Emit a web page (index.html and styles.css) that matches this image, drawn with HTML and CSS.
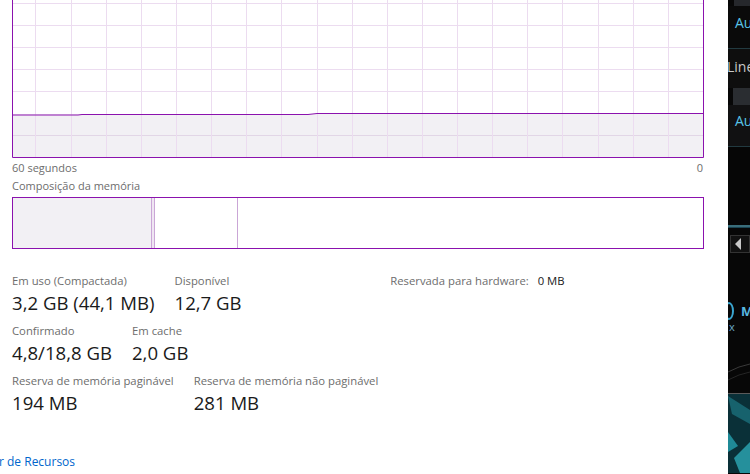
FILE: index.html
```html
<html>
<head>
    <title>Gerenciador de Tarefas - Memória</title>
    <link rel="stylesheet" href="styles.css">
</head>
<body>
<div class="window">
    <div class="main">
        <!-- gráfico de uso de memória -->
        <svg class="graph" width="692" height="159" viewBox="0 0 692 159">
            <rect x="1" y="114" width="690" height="43" fill="#f2f0f4"/>
            <g stroke="#ecdcf0" stroke-width="1">
                <line x1="0" y1="3.5" x2="692" y2="3.5"/>
                <line x1="0" y1="25.5" x2="692" y2="25.5"/>
                <line x1="0" y1="47.5" x2="692" y2="47.5"/>
                <line x1="0" y1="69.5" x2="692" y2="69.5"/>
                <line x1="0" y1="91.5" x2="692" y2="91.5"/>
                <line x1="0" y1="135.5" x2="692" y2="135.5" stroke="#e2d6e6"/>
            </g>
            <g stroke="#ecdcf0" stroke-width="1">
                <line x1="23.5" y1="0" x2="23.5" y2="157"/>
                <line x1="59.5" y1="0" x2="59.5" y2="157"/>
                <line x1="94.5" y1="0" x2="94.5" y2="157"/>
                <line x1="129.5" y1="0" x2="129.5" y2="157"/>
                <line x1="164.5" y1="0" x2="164.5" y2="157"/>
                <line x1="199.5" y1="0" x2="199.5" y2="157"/>
                <line x1="234.5" y1="0" x2="234.5" y2="157"/>
                <line x1="269.5" y1="0" x2="269.5" y2="157"/>
                <line x1="305.5" y1="0" x2="305.5" y2="157"/>
                <line x1="340.5" y1="0" x2="340.5" y2="157"/>
                <line x1="375.5" y1="0" x2="375.5" y2="157"/>
                <line x1="410.5" y1="0" x2="410.5" y2="157"/>
                <line x1="445.5" y1="0" x2="445.5" y2="157"/>
                <line x1="480.5" y1="0" x2="480.5" y2="157"/>
                <line x1="515.5" y1="0" x2="515.5" y2="157"/>
                <line x1="550.5" y1="0" x2="550.5" y2="157"/>
                <line x1="586.5" y1="0" x2="586.5" y2="157"/>
                <line x1="621.5" y1="0" x2="621.5" y2="157"/>
                <line x1="656.5" y1="0" x2="656.5" y2="157"/>
            </g>
            <polyline points="0,115 66,115 70,114.5 296,114.5 305,113.5 692,113.5" fill="none" stroke="#8b12ae" stroke-width="1"/>
            <polyline points="0.5,0 0.5,157.5 691.5,157.5 691.5,0" fill="none" stroke="#8b12ae" stroke-width="1"/>
        </svg>
        <div class="axis">
            <span>60 segundos</span>
            <span>0</span>
        </div>
        <div class="caption">Composição da memória</div>
        <div class="composition">
            <div class="seg inuse"></div>
            <div class="seg modified"></div>
            <div class="seg standby"></div>
            <div class="seg free"></div>
        </div>

        <div class="stats">
            <div class="statsLeft">
                <div class="row">
                    <div class="stat">
                        <div class="label">Em uso (Compactada)</div>
                        <div class="value">3,2 GB (44,1 MB)</div>
                    </div>
                    <div class="stat">
                        <div class="label">Disponível</div>
                        <div class="value">12,7 GB</div>
                    </div>
                </div>
                <div class="row">
                    <div class="stat">
                        <div class="label">Confirmado</div>
                        <div class="value">4,8/18,8 GB</div>
                    </div>
                    <div class="stat">
                        <div class="label">Em cache</div>
                        <div class="value">2,0 GB</div>
                    </div>
                </div>
                <div class="row">
                    <div class="stat">
                        <div class="label">Reserva de memória paginável</div>
                        <div class="value">194 MB</div>
                    </div>
                    <div class="stat">
                        <div class="label">Reserva de memória não paginável</div>
                        <div class="value">281 MB</div>
                    </div>
                </div>
            </div>
            <div class="statsRight">
                <span class="label">Reservada para hardware:</span>
                <span class="small">0 MB</span>
            </div>
        </div>

        <a class="link" href="#">r de Recursos</a>
    </div>

    <!-- janela de outro programa atrás -->
    <div class="side">
        <div class="sideTop"></div>
        <div class="sideItem"><span class="cyan">Au</span></div>
        <div class="sideLine"></div>
        <div class="sideText">Line</div>
        <div class="sideBlock"></div>
        <div class="sideItem second"><span class="cyan">Au</span></div>
        <div class="sideLine"></div>
        <div class="sideGap"></div>
        <div class="tealLine"></div>
        <div class="arrowBox"><span class="arrow"></span></div>
        <div class="sideGap2"></div>
        <div class="logo"><span class="ring"></span><span class="logoM">M</span></div>
        <div class="logoX">x</div>
        <svg class="art" width="22" height="137" viewBox="0 0 22 137">
            <path d="M0 36 Q11 30 22 28" stroke="#3a3a3a" fill="none"/>
            <path d="M0 44 Q11 38 22 36" stroke="#262626" fill="none"/>
            <rect x="0" y="57" width="22" height="1" fill="#5a5a5a"/>
            <rect x="0" y="58" width="22" height="79" fill="#0a3038"/>
            <polygon points="0,60 22,74 22,88 4,78" fill="#17626d"/>
            <polygon points="0,96 10,110 0,116" fill="#1f8a97"/>
            <polygon points="6,122 22,106 22,137 12,137" fill="#25909c"/>
        </svg>
    </div>
</div>
</body>
</html>
```

FILE: styles.css
```css
body{
    margin: 0;
    font-family: "Open Sans", "Noto Sans", sans-serif;
    background-color: #ffffff;
    overflow: hidden;
}

.window{
    display: flex;
    width: 750px;
    height: 474px;
}

/* Painel de memória */
.main{
    flex: none;
    width: 692px;
    padding-left: 12px;
    padding-right: 24px;
    display: flex;
    flex-direction: column;
    background-color: #ffffff;
}

.graph{
    display: block;
}

.axis{
    display: flex;
    justify-content: space-between;
    font-size: 11px;
    line-height: 16px;
    color: #6d6d6d;
    margin-top: 1px;
    padding-right: 1px;
}

.caption{
    font-size: 11px;
    line-height: 16px;
    color: #6d6d6d;
    margin-top: 2px;
}

.composition{
    display: flex;
    height: 50px;
    border: 1px solid #8b12ae;
    margin-top: 3px;
}
.seg{
    height: 100%;
}
.inuse{
    width: 138px;
    background-color: #f2f0f4;
    border-right: 1px solid #caa6d6;
}
.modified{
    width: 2px;
    background-color: #efe6f2;
    border-right: 1px solid #caa6d6;
}
.standby{
    width: 82px;
    border-right: 1px solid #caa6d6;
}
.free{
    flex: 1;
}

/* Números */
.stats{
    display: flex;
    gap: 12px;
    margin-top: 24px;
}
.statsLeft{
    display: flex;
    flex-direction: column;
    gap: 7px;
}
.row{
    display: flex;
    gap: 20px;
}
.label{
    font-size: 11.3px;
    line-height: 16px;
    color: #6d6d6d;
}
.value{
    font-size: 18.6px;
    line-height: 27px;
    color: #1a1a1a;
}
.statsRight{
    display: flex;
    gap: 9px;
    align-items: baseline;
}
.small{
    font-size: 11.3px;
    line-height: 16px;
    color: #1a1a1a;
}

.link{
    margin-top: auto;
    margin-bottom: 4px;
    margin-left: -13px;
    font-size: 12px;
    line-height: 16px;
    color: #0066cc;
    text-decoration: none;
}

/* Janela escura atrás */
.side{
    flex: none;
    width: 22px;
    height: 474px;
    background-color: #070707;
    overflow: hidden;
    font-family: "Open Sans", sans-serif;
}
.sideTop{
    height: 6px;
    margin-left: 6px;
    background-color: #26282c;
}
.sideItem{
    height: 32px;
    padding-bottom: 10px;
    padding-left: 7px;
    display: flex;
    align-items: center;
    background-color: #0a0a0a;
}
.sideItem.second{
    height: 31px;
    background-color: #111112;
}
.cyan{
    color: #58c4e6;
    font-size: 14px;
    white-space: nowrap;
}
.sideLine{
    height: 1px;
    background-color: #223a40;
}
.sideText{
    height: 39px;
    line-height: 36px;
    color: #c8c8c8;
    font-size: 14px;
    margin-left: -1px;
    white-space: nowrap;
    background-color: #0e0e0e;
}
.sideBlock{
    height: 17px;
    margin-left: 5px;
    background-color: #2a2d31;
}
.sideGap{
    height: 78px;
    background-color: #060606;
}
.tealLine{
    height: 2px;
    border-bottom: 1px solid #1a4452;
    background-color: #3a6d7a;
}
.arrowBox{
    height: 16px;
    margin-top: 7px;
    margin-left: 2px;
    border: 1px solid #333;
    background-color: #111;
    display: flex;
    align-items: center;
}
.arrow{
    width: 0;
    height: 0;
    margin-left: 4px;
    border-top: 6px solid transparent;
    border-bottom: 6px solid transparent;
    border-right: 6px solid #c8c8c8;
}
.sideGap2{
    height: 49px;
}
.logo{
    display: flex;
    align-items: center;
    height: 18px;
}
.ring{
    flex: none;
    width: 6px;
    height: 14px;
    margin-left: -4px;
    border: 2px solid #3aa6d0;
    border-radius: 50%;
}
.logoM{
    margin-left: 7px;
    color: #58b8e0;
    font-size: 13px;
    font-weight: bold;
}
.logoX{
    height: 16px;
    line-height: 14px;
    font-size: 11px;
    color: #6aa8c8;
    padding-left: 1px;
}
.art{
    display: block;
}
```
